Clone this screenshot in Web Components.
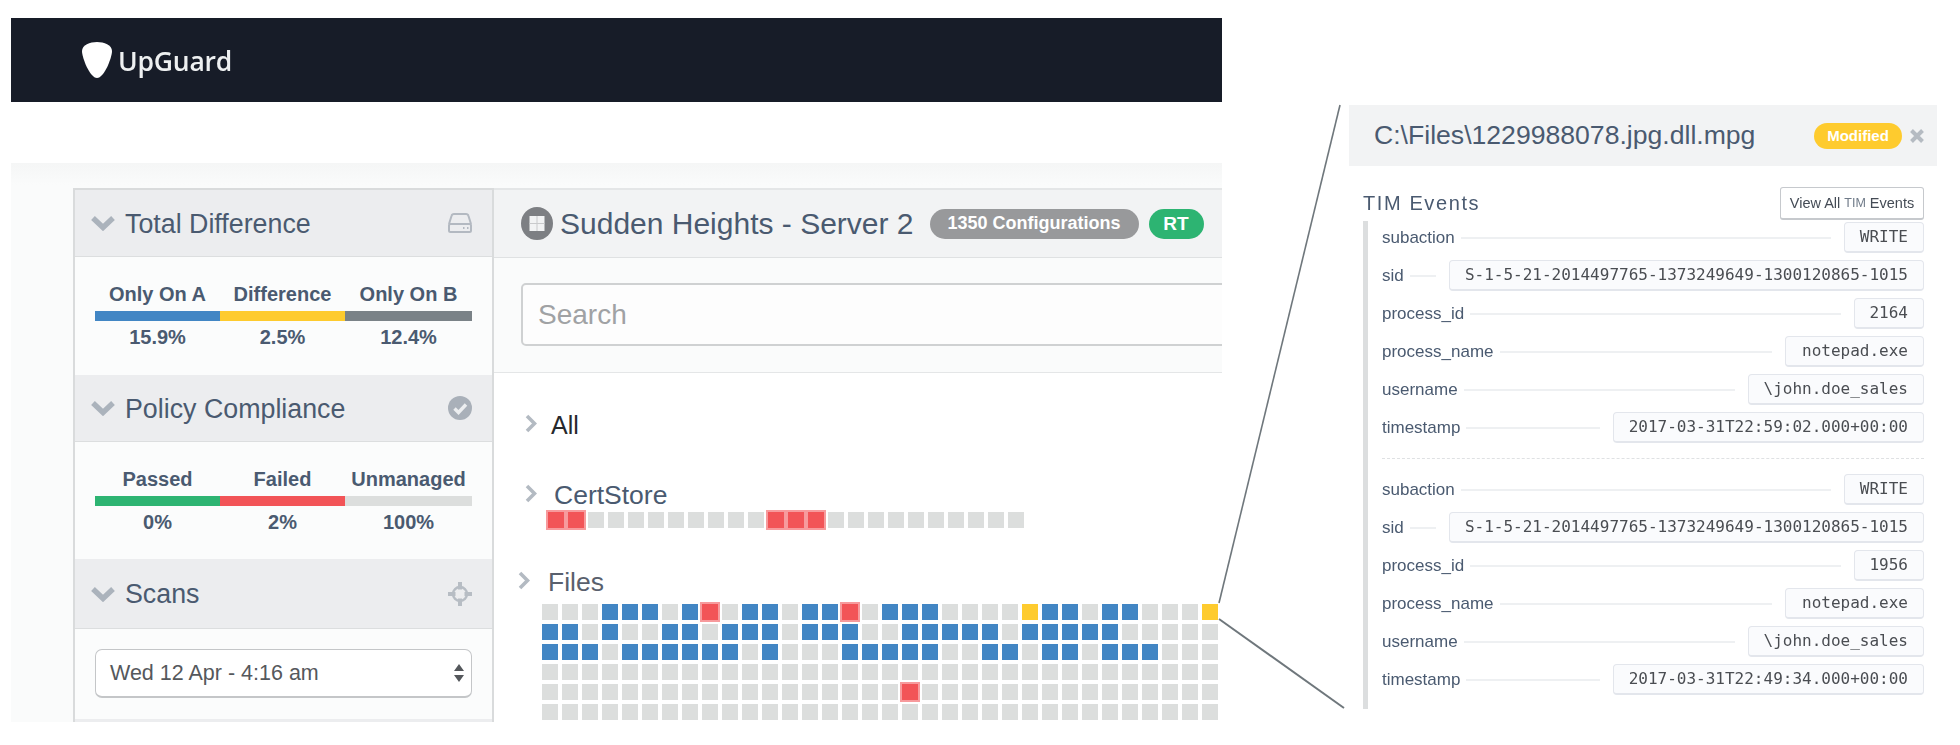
<!DOCTYPE html>
<html>
<head>
<meta charset="utf-8">
<title>UpGuard</title>
<style>
html, body { margin: 0; padding: 0; background: #fff; }
body { width: 1960px; height: 745px; overflow: hidden; position: relative; font-family: "Liberation Sans", Arial, sans-serif; }
ug-page { width: 1960px; }
</style>
</head>
<body>
<ug-page>
  <ug-app slot="app">
    <ug-panel slot="side" heading="Total Difference" icon="disk" style="--body:118px">
      <ug-stats data="Only On A|15.9%|#4286c4;Difference|2.5%|#fecb2e;Only On B|12.4%|#7a8287"></ug-stats>
    </ug-panel>
    <ug-panel slot="side" heading="Policy Compliance" icon="check" style="--body:117px">
      <ug-stats data="Passed|0%|#2db472;Failed|2%|#f25457;Unmanaged|100%|#dcdedd"></ug-stats>
    </ug-panel>
    <ug-panel slot="side" heading="Scans" icon="target" style="--head:69px;--body:90px">
      <ug-select value="Wed 12 Apr - 4:16 am"></ug-select>
    </ug-panel>
    <ug-node-head slot="main" name="Sudden Heights - Server 2" count="1350 Configurations" tag="RT"></ug-node-head>
    <ug-search slot="main"></ug-search>
    <ug-tree slot="main">
      <ug-tree-item label="All" style="--text:#26282c;--size:25px;--offset:26px;--top:37px"></ug-tree-item>
      <ug-tree-item label="CertStore" style="--offset:29px;--top:40px;--under:2px;--cells-x:23px">
        <ug-squares rows="rrgggggggggrrrgggggggggg"></ug-squares>
      </ug-tree-item>
      <ug-tree-item label="Files" style="--text:#59606d;--offset:30px;--top:39px;--shift:-7px;--under:7px;--cells-x:24px">
        <ug-squares rows="gggbbbgbrgbbgbbrgbbbggggybbgbbgggy bbgbggbbgbbbgbbbggbbbbbgbbbbbggggg bbbgbbbbbbgbgggbbbbbggbbgbbgbbbggg gggggggggggggggggggggggggggggggggg ggggggggggggggggggrggggggggggggggg gggggggggggggggggggggggggggggggggg"></ug-squares>
      </ug-tree-item>
    </ug-tree>
  </ug-app>
  <ug-detail slot="detail" path="C:\Files\1229988078.jpg.dll.mpg">
    <ug-event>
      <ug-field label="subaction" value="WRITE" style="--value:80px"></ug-field>
      <ug-field label="sid" value="S-1-5-21-2014497765-1373249649-1300120865-1015" style="--value:475px"></ug-field>
      <ug-field label="process_id" value="2164" style="--value:70px"></ug-field>
      <ug-field label="process_name" value="notepad.exe" style="--value:139px"></ug-field>
      <ug-field label="username" value="\john.doe_sales" style="--value:176px"></ug-field>
      <ug-field label="timestamp" value="2017-03-31T22:59:02.000+00:00" style="--value:311px"></ug-field>
    </ug-event>
    <ug-event divided>
      <ug-field label="subaction" value="WRITE" style="--value:80px"></ug-field>
      <ug-field label="sid" value="S-1-5-21-2014497765-1373249649-1300120865-1015" style="--value:475px"></ug-field>
      <ug-field label="process_id" value="1956" style="--value:70px"></ug-field>
      <ug-field label="process_name" value="notepad.exe" style="--value:139px"></ug-field>
      <ug-field label="username" value="\john.doe_sales" style="--value:176px"></ug-field>
      <ug-field label="timestamp" value="2017-03-31T22:49:34.000+00:00" style="--value:311px"></ug-field>
    </ug-event>
  </ug-detail>
</ug-page>

<script>
// small helper so each element below stays short
function define(name, css, html) {
    customElements.define(name, class extends HTMLElement {
        constructor() {
            super();
            this.attachShadow({ mode: "open" });
        }
        connectedCallback() {
            const get = (a) => this.getAttribute(a) || "";
            this.shadowRoot.innerHTML = `<style>${css}</style>` + (typeof html === "function" ? html(get) : html);
        }
    });
}

const icons = {
    disk: `<svg width="24" height="20" viewBox="0 0 24 20" fill="none" stroke="#b3b9c1" stroke-width="2"><path d="M1 11 L3.5 3 Q4 1 6 1 H18 Q20 1 20.5 3 L23 11"/><rect x="1" y="11" width="22" height="8" rx="1.5"/><path d="M15 15h1.5M19 15h1.5"/></svg>`,
    check: `<svg width="24" height="24" viewBox="0 0 24 24"><circle cx="12" cy="12" r="12" fill="#a9b0b9"/><path d="M6.5 12.5 L10.5 16.5 L18 8.5" fill="none" stroke="#eceef0" stroke-width="3.4"/></svg>`,
    target: `<svg width="24" height="24" viewBox="0 0 24 24" fill="none" stroke="#b7bdc4"><circle cx="12" cy="12" r="7" stroke-width="2.4"/><path d="M12 0v7.5M12 16.5V24M0 12h7.5M16.5 12H24" stroke-width="4"/></svg>`
};

define("ug-page", `
    :host { display: flex; align-items: flex-start; filter: blur(.45px); }
`, `<slot name="app"></slot><slot name="detail"></slot>
    <svg style="position:absolute;left:0;top:0;pointer-events:none" width="1960" height="745" fill="none" stroke="#6f777c">
        <path d="M1219 603 L1340 105" stroke-width="1.6"/>
        <path d="M1219 619 L1344 708" stroke-width="2"/>
    </svg>`);

define("ug-app", `
    :host { display: block; width: 1211px; margin: 18px 0 0 11px; flex: none; }
    .bar { height: 84px; background: #171c28; display: flex; align-items: center; padding-left: 71px; }
    .brand { color: #eef0f1; font: 600 26.5px/1 "Open Sans", sans-serif; margin-left: 6px; letter-spacing: -0.2px; position: relative; top: 1px; }
    .canvas { margin-top: 61px; height: 559px; box-sizing: border-box; padding: 25px 0 0 62px; display: flex; overflow: hidden;
        background: linear-gradient(#f5f6f6, #fafbfb 22px); }
    .side { width: 421px; flex: none; box-sizing: border-box; border: 2px solid #d9dbdc; border-bottom: 0; background: #ecedef; }
    .main { flex: 1; min-width: 0; border-top: 2px solid #e4e6e7; overflow: hidden; }
`, `<div class="bar">
        <svg width="30" height="36" viewBox="0 0 30 36"><path d="M15 0 C22 0 30 3 30 9 C30 16 22 36 15 36 C8 36 0 16 0 9 C0 3 8 0 15 0 Z" fill="#fff"/></svg>
        <span class="brand">UpGuard</span>
    </div>
    <div class="canvas">
        <div class="side"><slot name="side"></slot></div>
        <div class="main"><slot name="main"></slot></div>
    </div>`);

define("ug-panel", `
    :host { display: block; }
    .head { height: var(--head, 66px); background: #ecedef; border-bottom: 1px solid #dcdedf; display: flex; align-items: center; padding: 0 20px 0 16px; }
    .chev { flex: none; }
    .title { flex: 1; margin-left: 10px; padding-top: 2px; font-size: 26.8px; color: #4a5a70; white-space: nowrap; }
    .ico { display: flex; }
    .body { display: flow-root; height: var(--body, 117px); box-sizing: border-box; padding: 0 20px; background: #fbfcfc; }
`, (get) => `<div class="head">
        <svg class="chev" width="24" height="16" viewBox="0 0 24 16" fill="none" stroke="#abb3bc" stroke-width="5.4"><path d="M2 3 L12 12.5 L22 3"/></svg>
        <span class="title">${get("heading")}</span>
        <span class="ico">${icons[get("icon")] || ""}</span>
    </div>
    <div class="body"><slot></slot></div>`);

define("ug-stats", `
    :host { display: grid; grid-template-columns: 125px 125px 127px; padding-top: 26px; color: #4a5a70; font-weight: bold; font-size: 20px; text-align: center; }
    .l { line-height: 22px; white-space: nowrap; }
    .b { height: 10px; margin-top: 6px; }
    .v { line-height: 22px; margin-top: 5px; }
    .c { min-width: 0; }
`, (get) => get("data").split(";").map((s) => {
    const [l, v, c] = s.split("|");
    return `<div class="c"><div class="l">${l}</div><div class="b" style="background:${c}"></div><div class="v">${v}</div></div>`;
}).join(""));

define("ug-select", `
    :host { display: flex; align-items: center; height: 49px; box-sizing: border-box; margin-top: 20px; border: 1px solid #c4c6c8; border-bottom-width: 2px; border-radius: 7px; background: #fff;
        padding: 0 6px 0 14px; font-size: 21.5px; color: #55585c; }
    span { flex: 1; }
`, (get) => `<span>${get("value")}</span>
    <svg width="12" height="20" viewBox="0 0 12 20" fill="#55585c"><path d="M6 1 L11 8 H1 Z M6 19 L1 12 H11 Z"/></svg>`);

define("ug-node-head", `
    :host { display: flex; align-items: center; height: 67px; background: #f2f3f4; border-bottom: 1px solid #dfe1e2; padding-left: 27px; }
    .name { font-size: 30px; color: #4a5a70; margin-left: 7px; white-space: nowrap; }
    .pill { height: 30px; display: flex; align-items: center; justify-content: center; border-radius: 15px; color: #fff; font-size: 18px; font-weight: bold; white-space: nowrap; }
    .count { background: #98999b; width: 209px; margin-left: 16px; }
    .tag { background: #2db472; width: 55px; margin-left: 10px; font-size: 19px; }
`, (get) => `<svg width="32" height="33" viewBox="0 0 32 33"><ellipse cx="16" cy="16.5" rx="16" ry="16.5" fill="#7d7f83"/><rect x="8.5" y="9" width="15" height="15" fill="#f2f3f4"/><path d="M16 9v15M8.5 16.5h15" stroke="#c9cacc"/></svg>
    <span class="name">${get("name")}</span>
    <span class="pill count">${get("count")}</span>
    <span class="pill tag">${get("tag")}</span>`);

define("ug-search", `
    :host { display: block; padding: 25px 0 26px 27px; border-bottom: 1px solid #e4e6e7; }
    div { height: 63px; box-sizing: border-box; margin-right: -12px; border: 2px solid #cfd1d2; border-radius: 5px; background: #fdfdfd;
        display: flex; align-items: center; padding-left: 15px; font-size: 28px; color: #a0a2a4; }
`, `<div>Search</div>`);

define("ug-tree", `
    :host { display: block; background: #fff; padding-left: 31px; height: 349px; overflow: hidden; }
`, `<slot></slot>`);

define("ug-tree-item", `
    :host { display: block; margin-top: var(--top, 0); margin-left: var(--shift, 0); }
    .row { display: flex; align-items: center; height: 30px; }
    .arrow { flex: none; width: var(--offset, 26px); }
    .label { font-size: var(--size, 26.5px); color: var(--text, #4a5a70); white-space: nowrap; }
    .cells { margin-top: var(--under, 0); margin-left: var(--cells-x, 0); }
`, (get) => `<div class="row">
        <span class="arrow"><svg width="12" height="19" viewBox="0 0 12 19" fill="none" stroke="#b3bac2" stroke-width="3.6"><path d="M2 2 L9.5 9.5 L2 17"/></svg></span>
        <span class="label">${get("label")}</span>
    </div>
    <div class="cells"><slot></slot></div>`);

define("ug-squares", `
    :host { display: grid; gap: 4px; grid-auto-rows: 16px; grid-template-columns: repeat(34, 16px); }
    i { display: block; background: #dcdedd; }
    .b { background: #4286c4; }
    .y { background: #fecb2e; }
    .r { background: #f25457; outline: 2px solid #f79a9c; }
`, (get) => [...get("rows").replace(/ /g, "")].map((c) => `<i class="${c}"></i>`).join(""));

define("ug-detail", `
    :host { display: block; width: 588px; margin: 105px 0 0 127px; flex: none; color: #4a5a70; }
    .head { height: 61px; background: #f2f3f4; display: flex; align-items: center; padding-left: 25px; }
    .path { flex: 1; font-size: 26.6px; white-space: nowrap; }
    .badge { width: 88px; height: 26px; border-radius: 13px; background: #fecb2e; color: #fff; font-size: 15px; font-weight: bold; display: flex; align-items: center; justify-content: center; }
    .close { margin: 0 13px 0 8px; display: flex; }
    .sub { display: flex; align-items: center; justify-content: space-between; padding: 21px 13px 0 14px; }
    .sub b { font-weight: normal; font-size: 20px; letter-spacing: 1.6px; }
    .btn { width: 144px; height: 33px; box-sizing: border-box; border: 1px solid #c6c9cd; border-bottom-width: 2px; border-radius: 3px; background: #fff; font-size: 14.5px; color: #444b55; display: flex; align-items: center; justify-content: center; white-space: nowrap; }
    .btn em { font-style: normal; font-size: 12.5px; color: #6f7a88; margin: 0 4px; }
    .list { margin: 1px 13px 0 14px; border-left: 5px solid #dcdedf; padding: 1px 0 14px 14px; }
`, (get) => `<div class="head">
        <span class="path">${get("path")}</span>
        <span class="badge">Modified</span>
        <span class="close"><svg width="14" height="14" viewBox="0 0 14 14" stroke="#b5bbc2" stroke-width="4"><path d="M1.5 1.5 L12.5 12.5 M12.5 1.5 L1.5 12.5"/></svg></span>
    </div>
    <div class="sub"><b>TIM Events</b><span class="btn">View All<em>TIM</em>Events</span></div>
    <div class="list"><slot></slot></div>`);

define("ug-event", `
    :host { display: flex; flex-direction: column; gap: 7px; }
    :host([divided]) { margin-top: 15px; border-top: 1px dashed #dfe1e3; padding-top: 15px; }
`, `<slot></slot>`);

define("ug-field", `
    :host { display: flex; align-items: center; height: 31px; font-size: 17px; color: #4a5a70; }
    .rule { flex: 1; height: 2px; background: #eef0f2; margin: 0 13px 0 6px; }
    .val { width: var(--value); height: 31px; box-sizing: border-box; flex: none; border: 1px solid #e3e6ec; border-bottom-width: 2px; border-radius: 4px; background: #fafbfd;
        font: 16px/1 "DejaVu Sans Mono", monospace; color: #4a4d52; display: flex; align-items: center; justify-content: flex-end; padding-right: 15px; white-space: nowrap; }
`, (get) => `<span>${get("label")}</span><span class="rule"></span><span class="val">${get("value")}</span>`);
</script>
</body>
</html>
